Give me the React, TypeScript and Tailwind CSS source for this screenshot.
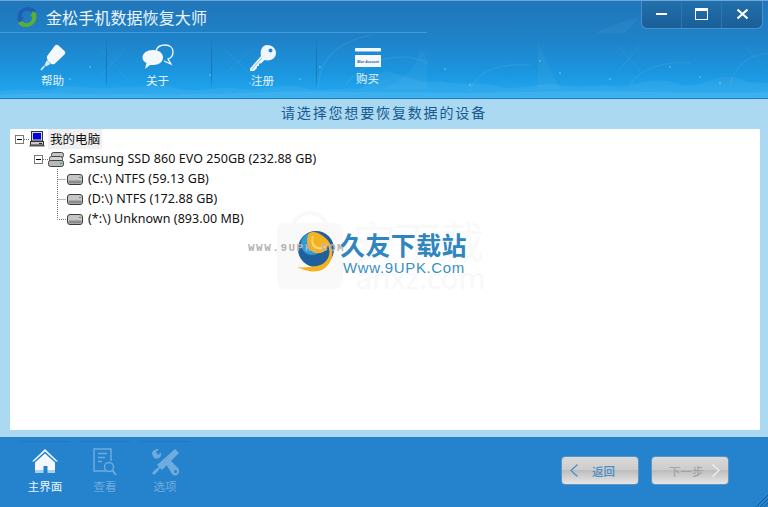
import type { ReactNode } from 'react'

const CJK = 'font-["Noto_Sans_CJK_SC","Liberation_Sans",sans-serif]'

function HeaderDecor() {
  return (
    <svg className="absolute inset-0 h-[98px] w-[768px] pointer-events-none" viewBox="0 0 768 98" fill="none">
      <path d="M0 98V90C20 86 40 92 60 86C80 84 100 90 120 86C140 88 160 82 180 88C200 92 220 84 240 88C260 90 280 82 300 86C320 92 340 86 360 88L384 70C400 72 420 84 440 80C460 86 480 78 500 86C520 90 540 80 560 84C580 88 600 82 620 86C640 82 660 74 680 84C700 88 720 70 740 78C750 84 760 80 768 82V98Z" fill="#ffffff" fillOpacity="0.06" />
      <path d="M0 98V94C80 90 150 96 240 92C330 88 420 94 520 91C620 88 700 94 768 91V98Z" fill="#ffffff" fillOpacity="0.07" />
      <path d="M318 90C318 56 340 40 372 34M470 90C476 70 500 62 530 64M345 84C370 56 400 50 428 62M630 84C640 66 670 60 690 62M730 84C736 62 750 54 768 52" stroke="#ffffff" strokeOpacity="0.06" strokeWidth="1.500" />
      <path d="M595 32C610 24 625 20 640 16L625 32Z M538 42L560 88L538 88Z M420 50C428 52 428 62 427 70L427 88L384 88C400 80 415 70 420 50Z" fill="#ffffff" fillOpacity="0.04" />
      <path d="M100 48L125 76M125 48L100 76M618 45L640 70M640 45L618 70M745 45L768 70M226 50L250 72M250 50L226 72" stroke="#ffffff" strokeOpacity="0.06" />
      {[[70, 78], [90, 66], [150, 84], [210, 74], [250, 82], [300, 78], [445, 68], [470, 84], [560, 72], [610, 78], [670, 66], [700, 76], [720, 82], [540, 60], [320, 66]].map(([x, y]) => (
        <circle key={`${x}-${y}`} cx={x} cy={y} r="1.200" fill="#ffffff" fillOpacity="0.2" />
      ))}
    </svg>
  )
}

function AppLogo() {
  return (
    <svg width="22" height="22" viewBox="0 0 22 22" fill="none">
      <path d="M2 13C0 6 6 1 12 1C16 1 19 3 20 5L16 7C14 4 9 4 7 7C6 8 5.500 10 6 12L8 11L5 17L0 13Z" fill="#1f5fb0" />
      <path d="M20 8C22 15 16 21 10 21C6 21 3 19 2 17L6 15C8 18 13 18 15 15C16 13 16.500 12 16 10L14 11L17 5L22 9Z" fill="#5fae2e" />
    </svg>
  )
}

function GlueIcon() {
  return (
    <svg width="26" height="28" viewBox="0 0 26 28">
      <path d="M15 1.500C16 0.500 17.500 0.500 18.500 1.500L24.500 7C25.500 8 25.500 9.500 24.500 10.500L14.500 20C13.500 20.500 11.500 20.500 9.500 18.500C6.500 15.500 6.500 13 7.500 11.500Z" fill="#f3f8fd" />
      <path d="M7 16L10.500 20L6 22.500L4.500 21Z" fill="#d6e8f6" />
      <path d="M4.500 22L1 26" stroke="#e8f2fa" strokeWidth="1.500" />
    </svg>
  )
}

function ChatIcon() {
  return (
    <svg width="32" height="26" viewBox="0 0 32 26">
      <path d="M14 7C15 3 19 1 23 1C28 1 31 4 31 8C31 12 29 14 26 15L29 20L22 17" fill="none" stroke="#f2f8fd" strokeWidth="1.300" />
      <path d="M11 6C17 6 21 9 21 13.500C21 18 17 21 11 21C10 21 9 21 8 21L3 25L4.500 19C2 18 0.500 16 0.500 13.500C0.500 9 5 6 11 6Z" fill="#f3f8fd" />
    </svg>
  )
}

function KeyIcon() {
  return (
    <svg width="28" height="28" viewBox="0 0 28 28">
      <path d="M18 1C23 1 27 4.500 27 9C27 13.500 23 16.500 18.500 16.500C17.500 16.500 16.500 16.300 15.500 16L12 19.500L10 19.500L10 22L8 22L8 24L5 27L1 27L1 24.500L12 12C10.800 7 13 1 18 1Z" fill="#eef6fc" />
      <circle cx="21.500" cy="6.500" r="2" fill="#2a86c8" />
      <path d="M3 25L13 14" stroke="#9cc4e2" strokeWidth="1" />
    </svg>
  )
}

function CardIcon() {
  return (
    <svg width="26" height="20" viewBox="0 0 26 20">
      <rect x="0" y="0" width="26" height="3.500" rx="1" fill="#f5f9fd" />
      <rect x="0" y="7" width="26" height="12" rx="0.500" fill="#f5f9fd" />
      <text x="13" y="14.500" textAnchor="middle" fontSize="3.400" fontStyle="italic" fontWeight="700" fill="#1e5a96" fontFamily="Liberation Sans">Blue Account</text>
    </svg>
  )
}

function NavItem({ icon, label, card = false }: { icon: ReactNode; label: string; card?: boolean }) {
  return (
    <div className="relative flex h-[53px] w-[105px] flex-col items-center">
      <div className={card ? 'mt-[11px] h-[20px]' : 'mt-[7px] h-[28px]'}>{icon}</div>
      <span className={`${card ? 'mt-[2px]' : ''} text-[11.5px] leading-[16px] text-[#e6f2fb]`}>{label}</span>
      {!card && <span className="absolute right-[-2px] top-0 h-full w-px bg-[linear-gradient(#1a6eae00,#1a6eaecc_30%,#1a6eaecc_70%,#1a6eae00)]" />}
    </div>
  )
}

function MonitorIcon() {
  return (
    <svg width="16" height="16" viewBox="0 0 16 16" className="shrink-0">
      <rect x="2.500" y="0.500" width="11" height="9.500" fill="#d8d8d8" stroke="#333" />
      <rect x="4" y="2" width="8" height="6.500" fill="#0000e0" />
      <rect x="1.500" y="10.500" width="13" height="3.500" fill="#c8c8c8" stroke="#333" />
      <rect x="0.500" y="14" width="15" height="1.500" fill="#555" />
      <rect x="10" y="12" width="3" height="1" fill="#222" />
    </svg>
  )
}

function DiskStackIcon() {
  return (
    <svg width="16" height="15" viewBox="0 0 16 15" className="shrink-0">
      <rect x="3.500" y="0.500" width="12" height="5" rx="2" fill="#c4c4c4" stroke="#444" />
      <rect x="1.500" y="4.500" width="13" height="5" rx="2" fill="#d2d2d2" stroke="#444" />
      <rect x="0.500" y="8.500" width="15" height="6" rx="2" fill="#b8b8b8" stroke="#444" />
      <rect x="12" y="11" width="2" height="1" fill="#22b14c" />
    </svg>
  )
}

function DiskIcon() {
  return (
    <svg width="16" height="11" viewBox="0 0 16 11" className="shrink-0">
      <rect x="0.500" y="0.500" width="15" height="10" rx="2.500" fill="#c6c6c6" stroke="#3c3c3c" />
      <rect x="1.500" y="6.500" width="13" height="3" rx="1" fill="#8c8c8c" />
      <rect x="12" y="3" width="2" height="1" fill="#22b14c" />
    </svg>
  )
}

function Expander({ className = '' }: { className?: string }) {
  return (
    <span className={`flex h-[9px] w-[9px] shrink-0 items-center justify-center border border-[#7a7a7a] bg-white ${className}`}>
      <span className="h-px w-[5px] bg-black" />
    </span>
  )
}

const TREE_TEXT = 'whitespace-nowrap text-[12.5px] leading-[20px] tracking-[0.06px] text-[#111] font-["Noto_Sans","Noto_Sans_CJK_SC",sans-serif]'

function DriveRow({ label, last = false }: { label: string; last?: boolean }) {
  return (
    <div className="flex h-5 items-center">
      {/* dotted connector */}
      <svg width="57" height="20" className="shrink-0">
        <path d={last ? 'M47.500 0V10.500H56' : 'M47.500 0V20M47.500 10.500H56'} stroke="#777" strokeDasharray="1 1" fill="none" />
      </svg>
      <DiskIcon />
      <span className={`ml-[5px] ${TREE_TEXT}`}>{label}</span>
    </div>
  )
}

function DeviceTree() {
  return (
    <div>
      <div className="flex h-5 items-center">
        <Expander className="ml-[5px]" />
        <span className="h-px w-[5px] border-t border-dotted border-[#777]" />
        <MonitorIcon />
        <span className={`ml-[3px] h-[20px] bg-[#f0f0f0] px-[2px] ${TREE_TEXT} ${CJK}`}>我的电脑</span>
      </div>
      <div className="flex h-5 items-center">
        <svg width="24" height="20" className="shrink-0">
          <path d="M27.500 0V6" stroke="#777" strokeDasharray="1 1" />
        </svg>
        <Expander />
        <span className="h-px w-[5px] border-t border-dotted border-[#777]" />
        <DiskStackIcon />
        <span className={`ml-[5px] ${TREE_TEXT}`}>Samsung SSD 860 EVO 250GB (232.88 GB)</span>
      </div>
      <DriveRow label="(C:\) NTFS (59.13 GB)" />
      <DriveRow label="(D:\) NTFS (172.88 GB)" />
      <DriveRow label="(*:\) Unknown (893.00 MB)" last />
    </div>
  )
}

function Watermark() {
  return (
    <div className="absolute left-[238px] top-[80px] h-[85px] w-[260px] pointer-events-none">
      {/* faint bag + characters behind the logo */}
      <div className="absolute left-[29px] top-[14px] h-[66px] w-[66px] rounded-[8px] bg-[#f9f9f9]" />
      <div className="absolute left-[42px] top-[2px] h-[24px] w-[40px] rounded-t-[20px] border-[4px] border-b-0 border-[#f9f9f9]" />
      <span className={`absolute left-[104px] top-[6px] whitespace-nowrap text-[44px] leading-[50px] text-[#f9f9f9] ${CJK}`}>安下载</span>
      <span className="absolute left-[108px] top-[52px] whitespace-nowrap text-[29px] leading-[34px] text-[#f8f8f8] font-['Noto_Sans',sans-serif]">anxz.com</span>

      <svg width="40" height="45" viewBox="0 0 40 45" className="absolute left-[47px] top-[21px]">
        <circle cx="21" cy="19" r="18" fill="#1f5f9c" />
        <circle cx="17" cy="14" r="11" fill="#2e9cd8" />
        <path d="M14 3C10 10 12 21 21 23C27 24 32 21 33 15C37 25 32 34 22 36C14 37 8 38 2 37C9 40 20 45 30 38C40 30 40 14 28 6C23 2 18 1 14 3Z" fill="#f4b223" />
        <path d="M18 6C16 10 17 17 23 18C27 19 30 17 32 14" fill="none" stroke="#fbd76a" strokeWidth="2" />
      </svg>
      <span className="absolute left-0 top-[32px] whitespace-nowrap text-[11px] font-bold leading-[14px] tracking-[1.5px] text-[#b4b4b4] font-['Liberation_Mono',monospace]">WWW.9UPK.COM</span>
      <span className={`absolute left-[92px] top-[19px] whitespace-nowrap text-[25px] font-bold leading-[32px] tracking-[0.4px] text-[#2f86bf] ${CJK}`}>久友下载站</span>
      <span className="absolute left-[95px] top-[50px] whitespace-nowrap text-[15px] leading-[18px] tracking-[0.65px] text-[#3a8fc4] font-['Liberation_Sans',sans-serif]">Www.9UPK.Com</span>
    </div>
  )
}

function HomeIcon() {
  return (
    <svg width="28" height="26" viewBox="0 0 28 26">
      <path d="M14 1L27 13.500H25L14 3.500L3 13.500H1Z" fill="#f4f8fd" />
      <path d="M14 5.500L24 14.500V25H16.500V18H12.500V25H4V14.500Z" fill="#f4f8fd" />
      <rect x="4" y="22" width="20" height="3" fill="#2583cd" fillOpacity="0.35" />
    </svg>
  )
}

function ReportIcon() {
  return (
    <svg width="24" height="29" viewBox="0 0 24 29" fill="none" stroke="#6fabdc">
      <path d="M13 23H1V1H18V13" strokeWidth="1.500" />
      <path d="M5 5.500H14M5 9.500H12M5 13.500H9" strokeWidth="1.500" />
      <circle cx="16" cy="19" r="4.500" strokeWidth="1.500" />
      <path d="M19.500 22.500L23 27" strokeWidth="2" />
    </svg>
  )
}

function ToolsIcon() {
  return (
    <svg width="29" height="28" viewBox="0 0 29 28" fill="#6fabdc">
      <path d="M24 1L28 5L11 22L9 20L7 23L3 27L1 25L5 21L8 19L6 17Z" />
      <path d="M1 6C1 3 4 0.500 8 1L5 4L7 7L10 4.500C11 8 8.500 11 5 10.500L3 10Z" />
      <path d="M15 16L19 12L27 20C29 22 28 25 27 26C25 28 23 28 21 26Z" />
      <circle cx="24.500" cy="23.500" r="1.500" fill="#2583cd" />
    </svg>
  )
}

function FooterTab({ icon, label, active = false }: { icon: ReactNode; label: string; active?: boolean }) {
  return (
    <div className="flex w-[60px] flex-col items-center">
      <span className="h-px w-[50px] bg-[#2279c0]" />
      <div className="mt-[6px] flex h-[30px] items-start justify-center">{icon}</div>
      <span className={`text-[11.5px] leading-[16px] ${active ? 'text-[#eef6fc]' : 'text-[#6fabdc]'}`}>{label}</span>
    </div>
  )
}

function StepButton({ label, dir, enabled = false }: { label: string; dir: 'prev' | 'next'; enabled?: boolean }) {
  const color = enabled ? 'text-[#4a8fc4]' : 'text-[#a3a3a3]'
  const arrow = (
    <svg width="8" height="13" viewBox="0 0 8 13" fill="none" stroke={enabled ? '#4a8fc4' : '#f0f0f0'} strokeWidth="1.200">
      <path d={dir === 'prev' ? 'M7.500 0.500L1 6.500L7.500 12.500' : 'M0.500 0.500L7 6.500L0.500 12.500'} />
    </svg>
  )
  return (
    <div className={`relative flex h-[29px] w-[78px] items-center rounded-[4px] border border-[#5b93c2] bg-[linear-gradient(#d9d9d9_0%,#cccccc_49%,#bdbdbd_50%,#e6e6e6_100%)] ${dir === 'prev' ? 'pl-[8px]' : 'pl-[17px]'}`}>
      {dir === 'prev' && arrow}
      <span className={`${dir === 'prev' ? 'ml-[14px]' : ''} text-[11.5px] font-medium leading-[16px] ${color}`}>{label}</span>
      {dir === 'next' && <span className="ml-[8px]">{arrow}</span>}
    </div>
  )
}

export default function App() {
  return (
    <div className={`flex h-[507px] w-[768px] flex-col overflow-hidden bg-[#acd9f2] ${CJK}`}>
      {/* Header */}
      <header className="relative h-[99px] shrink-0 overflow-hidden border-b border-b-[#1f7cc0] border-t border-t-[#6aa8dc] bg-[linear-gradient(#2176b9_0%,#1f82c9_40%,#1a97e0_75%,#24a9f0_100%)]">
        <HeaderDecor />
        <div className="relative flex h-[32px] w-[427px] items-center border-b border-b-[#3c9ae0] pl-[16px]">
          <AppLogo />
          <span className="ml-[8px] text-[16px] leading-[22px] tracking-[0.1px] text-[#eef5fb]">金松手机数据恢复大师</span>
        </div>
        <nav className="relative mt-[4px] flex">
          <NavItem icon={<GlueIcon />} label="帮助" />
          <NavItem icon={<ChatIcon />} label="关于" />
          <NavItem icon={<KeyIcon />} label="注册" />
          <NavItem icon={<CardIcon />} label="购买" card />
        </nav>
        {/* window buttons */}
        <div className="absolute right-[5px] top-[-1px] flex h-[29px] w-[122px] rounded-b-[6px] border border-t-0 border-[#4a90cf] bg-[linear-gradient(#2270ac,#1a5f98)]">
          <div className="flex w-[40px] items-center justify-center border-r border-r-[#2c75ae]">
            <span className="h-[2px] w-[11px] bg-white" />
          </div>
          <div className="flex w-[40px] items-center justify-center border-r border-r-[#2c75ae]">
            <span className="h-[12px] w-[13px] border border-t-[3px] border-white" />
          </div>
          <div className="flex flex-1 items-center justify-center">
            <svg width="11" height="10" viewBox="0 0 11 10" stroke="#fff" strokeWidth="2"><path d="M0.500 0.500L10.500 9.500M10.500 0.500L0.500 9.500" /></svg>
          </div>
        </div>
      </header>

      {/* Prompt */}
      <div className="flex h-[30px] shrink-0 items-center justify-center pb-[3px] text-[14px] tracking-[1.85px] text-[#175a90]">
        请选择您想要恢复数据的设备
      </div>

      {/* Device list */}
      <main className="relative ml-[10px] h-[301px] w-[750px] shrink-0 bg-white">
        <DeviceTree />
        <Watermark />
      </main>

      {/* Footer */}
      <footer className="relative mt-[7px] flex flex-1 items-start justify-between bg-[#2583cd] pl-[15px] pr-[39px]">
        <div className="flex pt-[4px]">
          <FooterTab icon={<HomeIcon />} label="主界面" active />
          <FooterTab icon={<ReportIcon />} label="查看" />
          <FooterTab icon={<ToolsIcon />} label="选项" />
        </div>
        <div className="flex gap-[12px] pt-[19px]">
          <StepButton label="返回" dir="prev" enabled />
          <StepButton label="下一步" dir="next" />
        </div>
        <svg width="12" height="12" viewBox="0 0 12 12" className="absolute bottom-0 right-0" stroke="#175a90" strokeWidth="1">
          <path d="M0 12L12 0M4 12L12 4M8 12L12 8" />
        </svg>
      </footer>
    </div>
  )
}
